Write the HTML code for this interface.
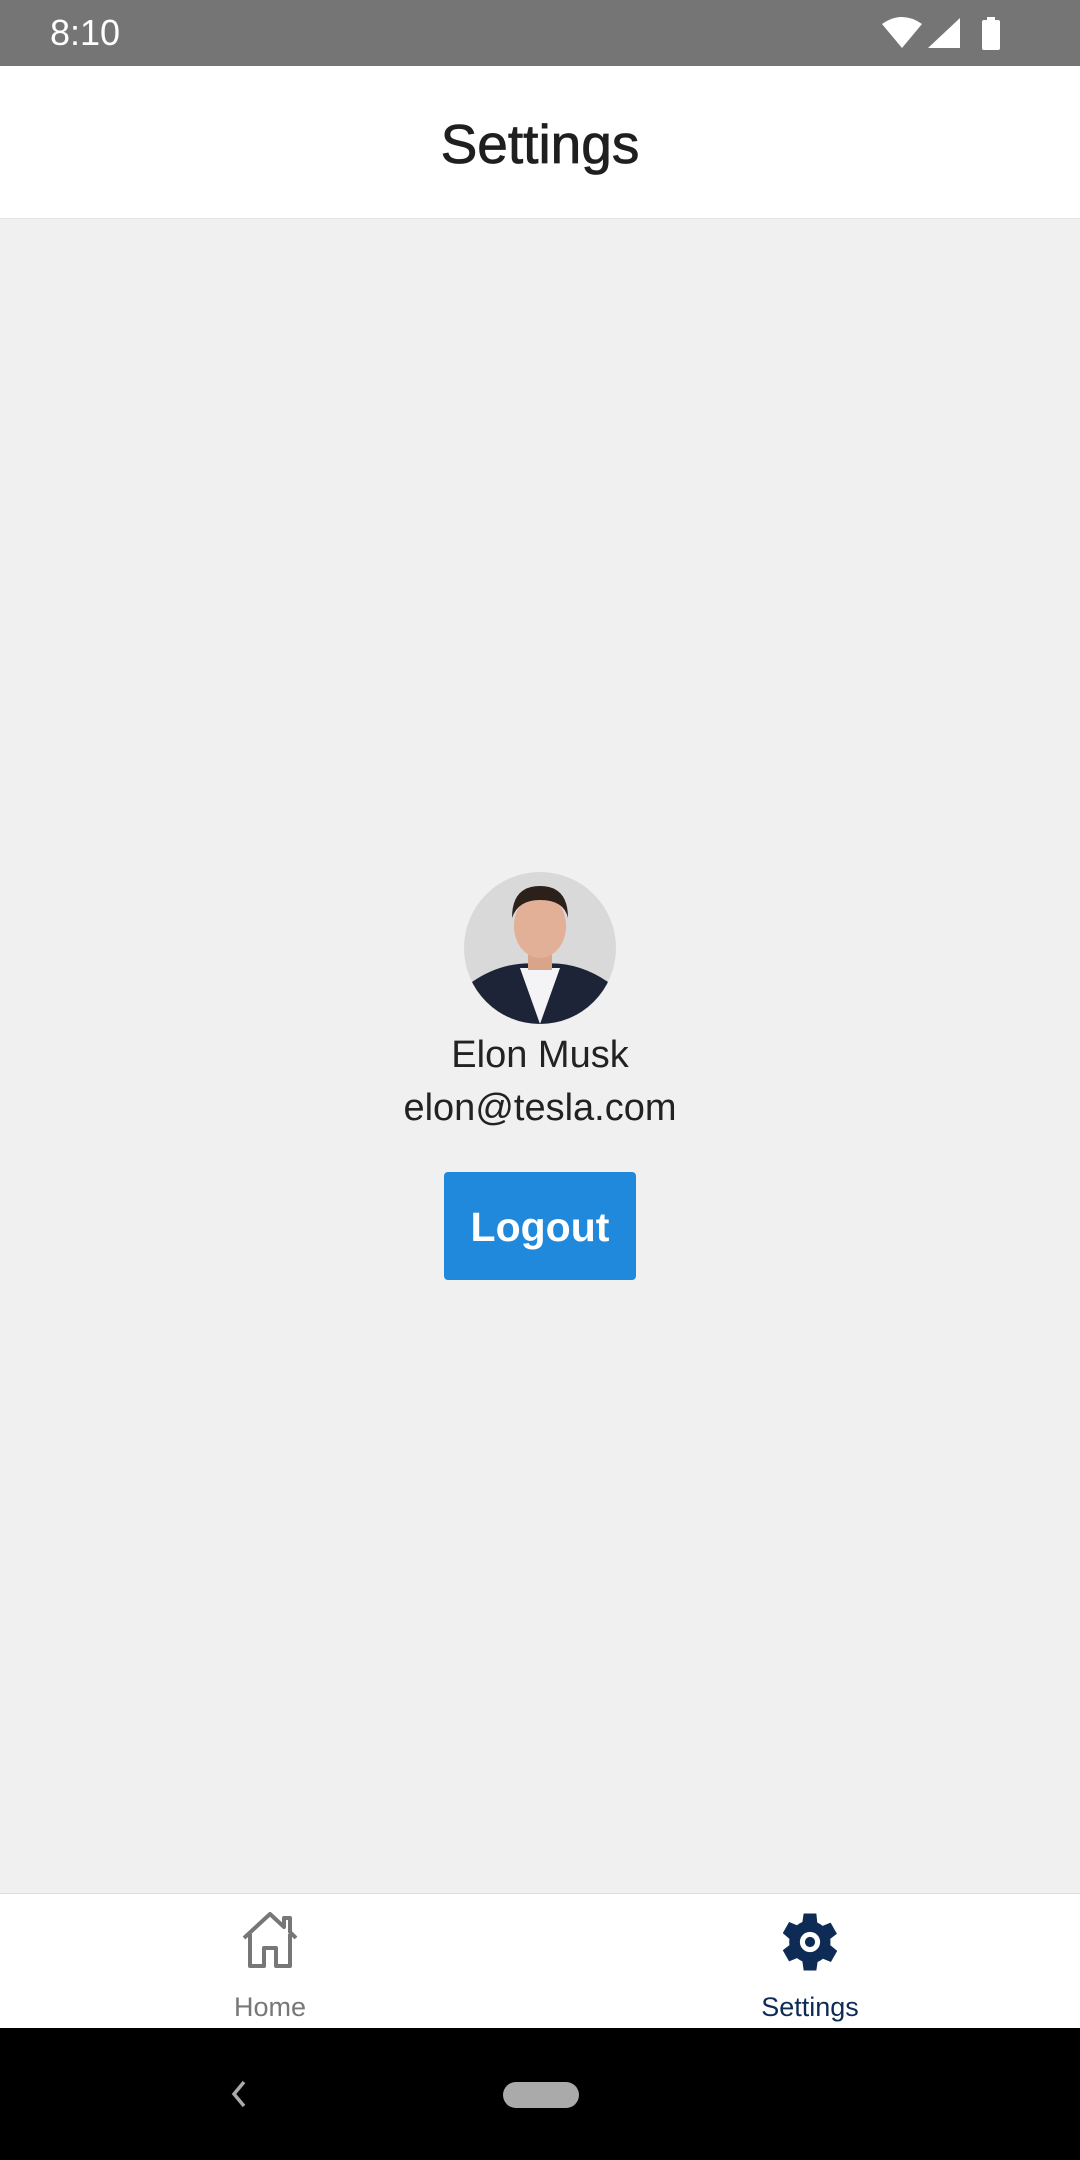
<!DOCTYPE html>
<html><head><meta charset="utf-8"><style>
*{margin:0;padding:0;box-sizing:border-box}
body{width:1080px;height:2160px;position:relative;font-family:"Liberation Sans",Roboto,sans-serif;background:#f0f0f0;overflow:hidden}
.abs{position:absolute}
</style></head><body>
<div class="abs" style="left:0;top:0;width:1080px;height:66px;background:#757575"></div>
<div class="abs" style="left:50px;top:12px;color:#fff;font-size:36px">8:10</div>
<svg class="abs" style="left:880px;top:16px" width="130" height="36" viewBox="0 0 130 36">
<path d="M2 8 Q22 -6 42 8 L22 32 Z" fill="#fff"/>
<path d="M48 32 L80 2 L80 32 Z" fill="#fff"/>
<rect x="102" y="4" width="18" height="30" rx="2" fill="#fff"/><rect x="107" y="1" width="8" height="4" fill="#fff"/>
</svg>
<div class="abs" style="left:0;top:66px;width:1080px;height:153px;background:#fff;border-bottom:1px solid #e4e4e4"></div>
<div class="abs" style="left:0;top:111px;width:1080px;text-align:center;font-size:55px;color:#1f1f1f;line-height:66px;-webkit-text-stroke:0.8px #1f1f1f">Settings</div>

<svg class="abs" style="left:464px;top:872px" width="152" height="152" viewBox="0 0 152 152">
<defs><clipPath id="c"><circle cx="76" cy="76" r="76"/></clipPath></defs>
<g clip-path="url(#c)">
<rect width="152" height="152" fill="#d9d9d9"/>
<path d="M0 152 L8 110 Q40 88 76 92 Q112 88 144 110 L152 152Z" fill="#1d2438"/>
<path d="M56 96 L76 152 L96 96 Z" fill="#f4f4f6"/>
<rect x="64" y="70" width="24" height="28" fill="#d9a58a"/>
<ellipse cx="76" cy="54" rx="26" ry="32" fill="#e2b096"/>
<path d="M48 46 Q48 14 76 14 Q104 14 104 46 Q100 28 76 28 Q54 28 48 46Z" fill="#2b201a"/>
</g></svg>
<div class="abs" style="left:0;top:1034px;width:1080px;text-align:center;font-size:38px;color:#222">Elon Musk</div>
<div class="abs" style="left:0;top:1087px;width:1080px;text-align:center;font-size:38px;color:#222">elon@tesla.com</div>
<div class="abs" style="left:444px;top:1172px;width:192px;height:108px;background:#2089dc;border-radius:4px;color:#fff;font-weight:bold;font-size:41px;text-align:center;line-height:110px">Logout</div>

<div class="abs" style="left:0;top:1893px;width:1080px;height:135px;background:#fff;border-top:1px solid #ddd"></div>
<svg class="abs" style="left:238px;top:1910px" width="64" height="60" viewBox="0 0 64 60">
<path d="M6 28 L32 4 L46 17 L46 8 L52 8 L52 22 L58 28 M12 24 L12 56 L26 56 L26 38 L38 38 L38 56 L52 56 L52 24" fill="none" stroke="#777" stroke-width="4" stroke-linejoin="round"/>
</svg>
<div class="abs" style="left:170px;top:1992px;width:200px;text-align:center;font-size:27px;color:#777">Home</div>
<svg class="abs" style="left:772px;top:1904px" width="76" height="76" viewBox="0 0 24 24">
<path fill="#0d2b55" d="M19.4 13a7.5 7.5 0 0 0 0-2l2.1-1.6-2-3.5-2.5 1a7 7 0 0 0-1.7-1L15 3h-4l-.4 2.7a7 7 0 0 0-1.7 1l-2.5-1-2 3.5L6.5 11a7.5 7.5 0 0 0 0 2l-2.1 1.6 2 3.5 2.5-1a7 7 0 0 0 1.7 1L11 21h4l.4-2.7a7 7 0 0 0 1.7-1l2.5 1 2-3.5zM13 15.2a3.2 3.2 0 1 1 0-6.4 3.2 3.2 0 0 1 0 6.4z" transform="translate(-1 0)"/>
<circle cx="12" cy="12" r="1.6" fill="#0d2b55"/>
</svg>
<div class="abs" style="left:710px;top:1992px;width:200px;text-align:center;font-size:27px;color:#0d2b55">Settings</div>

<div class="abs" style="left:0;top:2028px;width:1080px;height:132px;background:#000"></div>
<svg class="abs" style="left:226px;top:2078px" width="26" height="32" viewBox="0 0 26 32"><path d="M18 4 L8 16 L18 28" fill="none" stroke="#aaa" stroke-width="3.5"/></svg>
<div class="abs" style="left:503px;top:2082px;width:76px;height:26px;border-radius:13px;background:#aaa"></div>
</body></html>
